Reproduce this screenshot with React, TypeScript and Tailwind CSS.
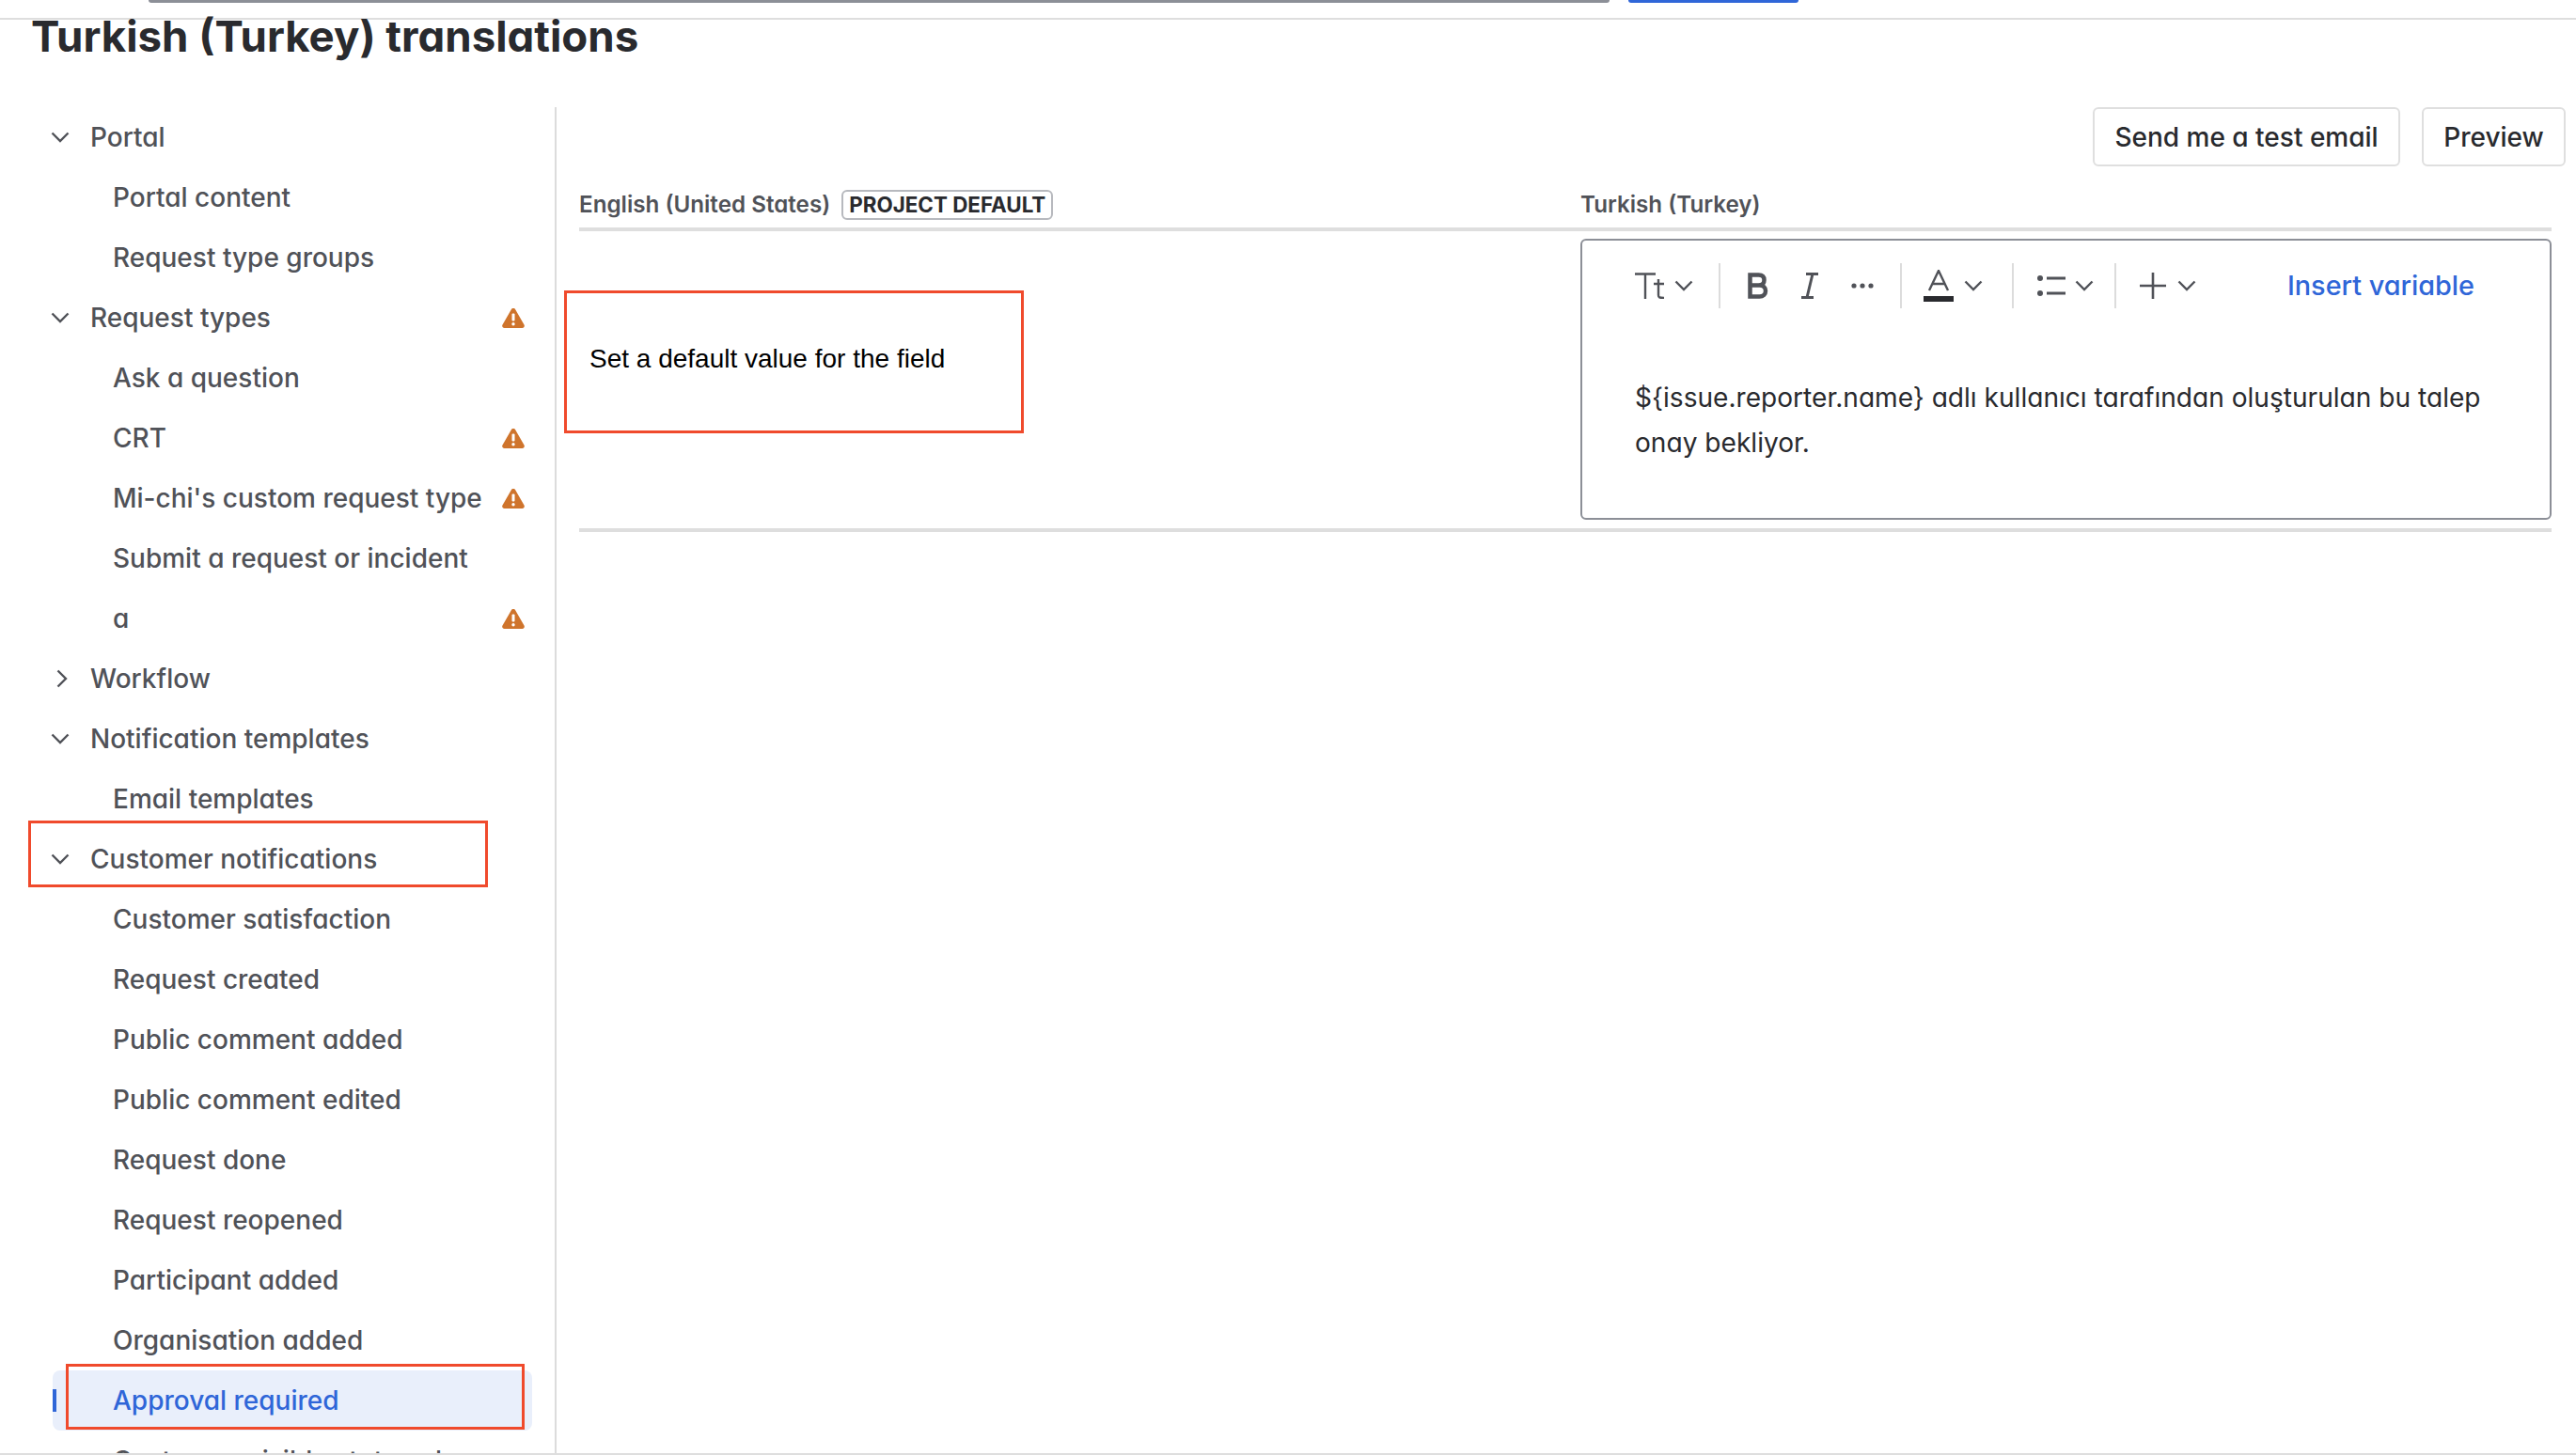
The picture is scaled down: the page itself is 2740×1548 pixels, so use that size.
import React from 'react';

const sans = "font-['Inter','Noto_Sans',sans-serif] [font-feature-settings:'cv11']";

type NavItem = {
  label: string;
  level: 0 | 1;
  chevron?: 'down' | 'right';
  warn?: boolean;
  active?: boolean;
};

const navItems: NavItem[] = [
  { label: 'Portal', level: 0, chevron: 'down' },
  { label: 'Portal content', level: 1 },
  { label: 'Request type groups', level: 1 },
  { label: 'Request types', level: 0, chevron: 'down', warn: true },
  { label: 'Ask a question', level: 1 },
  { label: 'CRT', level: 1, warn: true },
  { label: "Mi-chi's custom request type", level: 1, warn: true },
  { label: 'Submit a request or incident', level: 1 },
  { label: 'a', level: 1, warn: true },
  { label: 'Workflow', level: 0, chevron: 'right' },
  { label: 'Notification templates', level: 0, chevron: 'down' },
  { label: 'Email templates', level: 1 },
  { label: 'Customer notifications', level: 0, chevron: 'down' },
  { label: 'Customer satisfaction', level: 1 },
  { label: 'Request created', level: 1 },
  { label: 'Public comment added', level: 1 },
  { label: 'Public comment edited', level: 1 },
  { label: 'Request done', level: 1 },
  { label: 'Request reopened', level: 1 },
  { label: 'Participant added', level: 1 },
  { label: 'Organisation added', level: 1 },
  { label: 'Approval required', level: 1, active: true },
  { label: 'Customer-visible status change', level: 1 },
];

function ChevronDown({ className }: { className?: string }) {
  return (
    <svg viewBox="0 0 20 12" className={className} fill="none" stroke="currentColor" strokeWidth="2.4">
      <path d="M1.5 1.5 10 10l8.500-8.500" />
    </svg>
  );
}

function ChevronRight({ className }: { className?: string }) {
  return (
    <svg viewBox="0 0 12 20" className={className} fill="none" stroke="currentColor" strokeWidth="2.4">
      <path d="M1.500 1.500 10 10l-8.500 8.500" />
    </svg>
  );
}

function WarnIcon() {
  return (
    <svg viewBox="0 0 24 21" className="w-[24px] h-[21px]">
      <path d="M12 0c1 0 1.800.5 2.300 1.400l9.200 16.200c.9 1.600-.2 3.400-2 3.400H2.500c-1.800 0-2.900-1.800-2-3.400L9.700 1.400C10.200.5 11 0 12 0z" fill="#cf742c" />
      <rect x="10.500" y="5.500" width="3" height="8" rx="1" fill="#fff" />
      <circle cx="12" cy="16.800" r="1.700" fill="#fff" />
    </svg>
  );
}

function NavRow({ item }: { item: NavItem }) {
  const indent = item.active
    ? 'ml-[24px] pl-[64px]'
    : item.level === 1
      ? 'pl-[88px]'
      : item.chevron === 'right'
        ? 'pl-[28px]'
        : 'pl-[22px]';
  return (
    <div
      className={`relative flex items-center h-[64px] shrink-0 rounded-[8px] pr-[8px] ${indent} ${
        item.active ? 'bg-[#e9effb] text-[#2f66d8]' : 'text-[#505258]'
      }`}
    >
      {item.active && <span className="absolute left-0 top-[20px] w-[4px] h-[24px] bg-[#2f66d8]" />}
      {item.chevron === 'down' && <ChevronDown className="w-[20px] h-[12px] mr-[22px] shrink-0" />}
      {item.chevron === 'right' && <ChevronRight className="w-[12px] h-[20px] mr-[24px] shrink-0" />}
      <span className="text-[28px] font-medium leading-[34px] whitespace-nowrap">{item.label}</span>
      {item.warn && (
        <span className="ml-auto">
          <WarnIcon />
        </span>
      )}
    </div>
  );
}

function Sep({ className }: { className?: string }) {
  return <div className={`w-[2px] h-[48px] bg-[#dcdcdc] shrink-0 ${className}`} />;
}

function Toolbar() {
  const chev = 'w-[20px] h-[12px] text-[#505258] shrink-0';
  return (
    <div className="flex items-center h-[48px] pl-[56px] pr-[80px] text-[#505258]">
      <svg viewBox="0 0 32 28" className="w-[32px] h-[28px] shrink-0" fill="none" stroke="currentColor" strokeWidth="2.400">
        <path d="M0 1.500h22M11 1.500V28M25 7v17c0 2.500 1 3 6 3M20 12h11" />
      </svg>
      <ChevronDown className={`${chev} ml-[10px]`} />
      <Sep className="ml-[27px]" />
      <svg viewBox="0 0 22 28" className="w-[22px] h-[28px] ml-[29px] shrink-0" fill="none" stroke="currentColor" strokeWidth="4.500">
        <path d="M2.500 2.500h9c4 0 6 2 6 5.500s-2 5.500-6 5.500h-9zM2.500 13.500h10c4 0 6.500 2.500 6.500 6s-2.500 6-6.500 6h-10z" />
      </svg>
      <svg viewBox="0 0 18 28" className="w-[18px] h-[28px] ml-[35px] shrink-0" fill="none" stroke="currentColor" strokeWidth="3">
        <path d="M5 1.500h13M0 26.500h13M12 1.500 6 26.500" />
      </svg>
      <svg viewBox="0 0 24 6" className="w-[24px] h-[6px] ml-[35px] shrink-0" fill="currentColor">
        <circle cx="3" cy="3" r="2.600" />
        <circle cx="12" cy="3" r="2.600" />
        <circle cx="21" cy="3" r="2.600" />
      </svg>
      <Sep className="ml-[28px]" />
      <svg viewBox="0 0 32 34" className="w-[32px] h-[34px] ml-[23px] shrink-0">
        <path d="M6 22 16 1l10 21M9 15h14" fill="none" stroke="currentColor" strokeWidth="2.400" />
        <rect x="0" y="28" width="32" height="6" fill="#292a2e" />
      </svg>
      <ChevronDown className={`${chev} ml-[11px]`} />
      <Sep className="ml-[31px]" />
      <svg viewBox="0 0 30 24" className="w-[30px] h-[24px] ml-[25px] shrink-0" fill="currentColor">
        <circle cx="3" cy="4" r="3" />
        <circle cx="3" cy="20" r="3" />
        <rect x="10" y="2.500" width="20" height="3" />
        <rect x="10" y="18.500" width="20" height="3" />
      </svg>
      <ChevronDown className={`${chev} ml-[10px]`} />
      <Sep className="ml-[22px]" />
      <svg viewBox="0 0 28 28" className="w-[28px] h-[28px] ml-[25px] shrink-0" fill="none" stroke="currentColor" strokeWidth="2.600">
        <path d="M14 0v28M0 14h28" />
      </svg>
      <ChevronDown className={`${chev} ml-[12px]`} />
      <span className="ml-auto text-[#2f66d8] text-[28.8px] font-medium leading-[34px] whitespace-nowrap">Insert variable</span>
    </div>
  );
}

export default function App() {
  return (
    <div className={`relative w-[2740px] h-[1548px] overflow-hidden bg-white flex flex-col ${sans}`}>
      {/* cropped page header */}
      <div className="flex items-start h-[21px] shrink-0 border-b-[2px] border-[#dedede] pl-[158px]">
        <div className="w-[1554px] h-[3px] bg-[#8c8f97] rounded-b-[3px]" />
        <div className="w-[181px] h-[3px] ml-[20px] bg-[#2f66d8] rounded-b-[3px]" />
      </div>
      <div className="h-[93px] shrink-0 pl-[33px]">
        <h1 className="-mt-[10px] text-[45.6px] font-bold leading-[56px] text-[#292a2e] whitespace-nowrap">
          Turkish (Turkey) translations
        </h1>
      </div>

      <div className="flex flex-1 min-h-0 border-b-[2px] border-[#dedede]">
        {/* sidebar */}
        <nav className="w-[592px] shrink-0 border-r-[2px] border-[#dcdcdc] pl-[32px] pr-[24px] flex flex-col overflow-hidden">
          {navItems.map(item => (
            <NavRow key={item.label} item={item} />
          ))}
        </nav>

        {/* main */}
        <div className="flex-1 min-w-0 pl-[24px] pr-[26px]">
          <div className="flex justify-end gap-[23px] -mr-[15px]">
            <button className="h-[63px] w-[327px] rounded-[6px] border-[2px] border-[#dfdfdf] bg-white text-[28px] font-medium text-[#292a2e] leading-[34px]">
              Send me a test email
            </button>
            <button className="h-[63px] w-[153px] rounded-[6px] border-[2px] border-[#dfdfdf] bg-white text-[28px] font-medium text-[#292a2e] leading-[34px]">
              Preview
            </button>
          </div>

          <div className="flex items-center h-[69px] pt-[17px] border-b-[4px] border-[#dedede]">
            <div className="w-[1065px] flex items-center shrink-0">
              <span className="text-[24.2px] leading-[32px] font-semibold text-[#505258] whitespace-nowrap">English (United States)</span>
              <span className="ml-[12px] h-[32px] px-[6px] flex items-center rounded-[6px] border-[2px] border-[#b7b9be] text-[22.4px] font-bold text-[#292a2e] leading-[28px] whitespace-nowrap">
                PROJECT DEFAULT
              </span>
            </div>
            <span className="text-[24.2px] leading-[32px] font-semibold text-[#505258] whitespace-nowrap">Turkish (Turkey)</span>
          </div>

          <div className="flex pt-[8px] pb-[9px] border-b-[4px] border-[#dedede]">
            <div className="w-[1065px] shrink-0" />
            <div className="flex-1 h-[299px] rounded-[6px] border-[2px] border-[#8c8f97] pt-[24px]">
              <Toolbar />
              <p className="mt-[71px] px-[56px] text-[28.1px] leading-[48px] text-[#292a2e]">
                {'${issue.reporter.name}'} adlı kullanıcı tarafından oluşturulan bu talep onay bekliyor.
              </p>
            </div>
          </div>
        </div>
      </div>

      {/* red annotation boxes drawn on top of the screenshot */}
      <div className="absolute left-[600px] top-[309px] w-[489px] h-[152px] border-[3px] border-[#f04a2c] flex items-center pl-[24px] pb-[6px]">
        <span className="font-['Liberation_Sans',sans-serif] text-[28px] text-black whitespace-nowrap">
          Set a default value for the field
        </span>
      </div>
      <div className="absolute left-[30px] top-[873px] w-[489px] h-[71px] border-[3px] border-[#f04a2c]" />
      <div className="absolute left-[70px] top-[1451px] w-[488px] h-[70px] border-[3px] border-[#f04a2c]" />
    </div>
  );
}
